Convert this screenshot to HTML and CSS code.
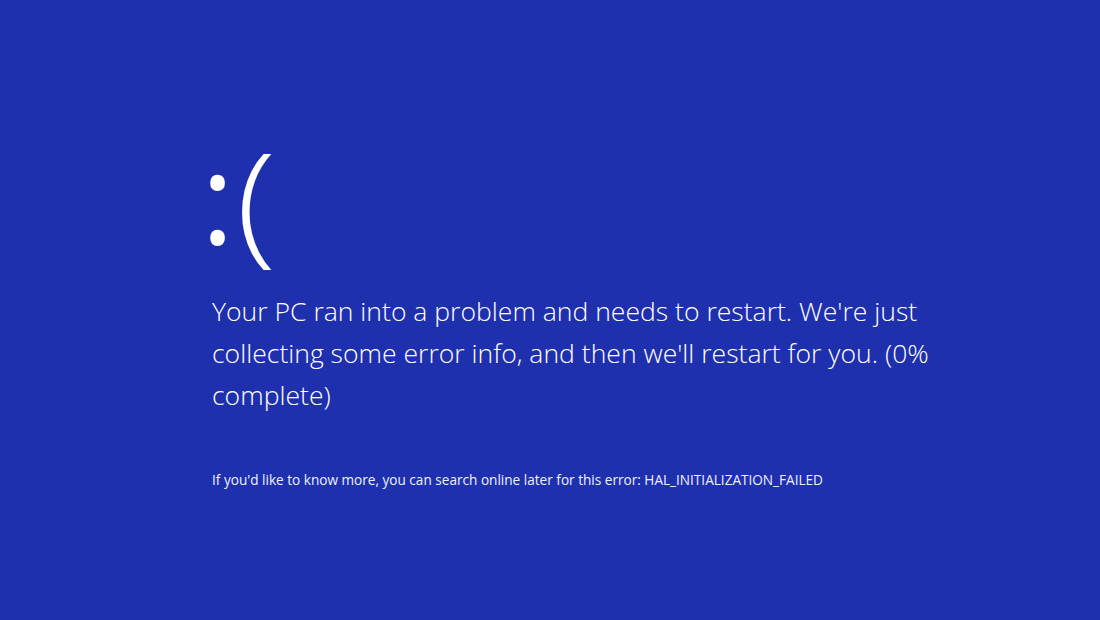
FILE: index.html
```html
<!DOCTYPE html>
<html>
<head>
<meta charset="utf-8">
<link rel="stylesheet" href="styles.css">
</head>
<body>
<main class="screen">
  <div class="face"><span class="colon">:</span><span class="paren">(</span></div>
  <p class="message">Your PC ran into a problem and needs to restart. We're just collecting some error info, and then we'll restart for you. (0% complete)</p>
  <p class="info">If you'd like to know more, you can search online later for this error: HAL_INITIALIZATION_FAILED</p>
</main>
</body>
</html>
```
FILE: styles.css
```css
html, body {
  margin: 0;
  padding: 0;
  background: #1f30ae;
  width: 1100px;
  height: 620px;
  overflow: hidden;
}
.screen {
  box-sizing: border-box;
  width: 1100px;
  height: 620px;
  padding: 130px 0 0 201px;
  color: #ffffff;
  font-family: "Open Sans", "Noto Sans", sans-serif;
  font-weight: 300;
}
.face {
  height: 160px;
  line-height: 136px;
  white-space: nowrap;
}
.colon {
  display: inline-block;
  font-size: 126px;
  font-weight: 400;
  transform: translateY(-5px);
}
.paren {
  display: inline-block;
  font-size: 132px;
  margin-left: 2px;
  transform: scaleX(1.12);
  transform-origin: left center;
}
.message {
  margin: 0;
  padding-left: 11px;
  width: 760px;
  font-size: 26.55px;
  line-height: 42px;
}
.info {
  margin: 54px 0 0;
  padding-left: 11px;
  font-size: 13.6px;
  line-height: 20px;
  font-weight: 400;
  color: #eef0fa;
}
```
